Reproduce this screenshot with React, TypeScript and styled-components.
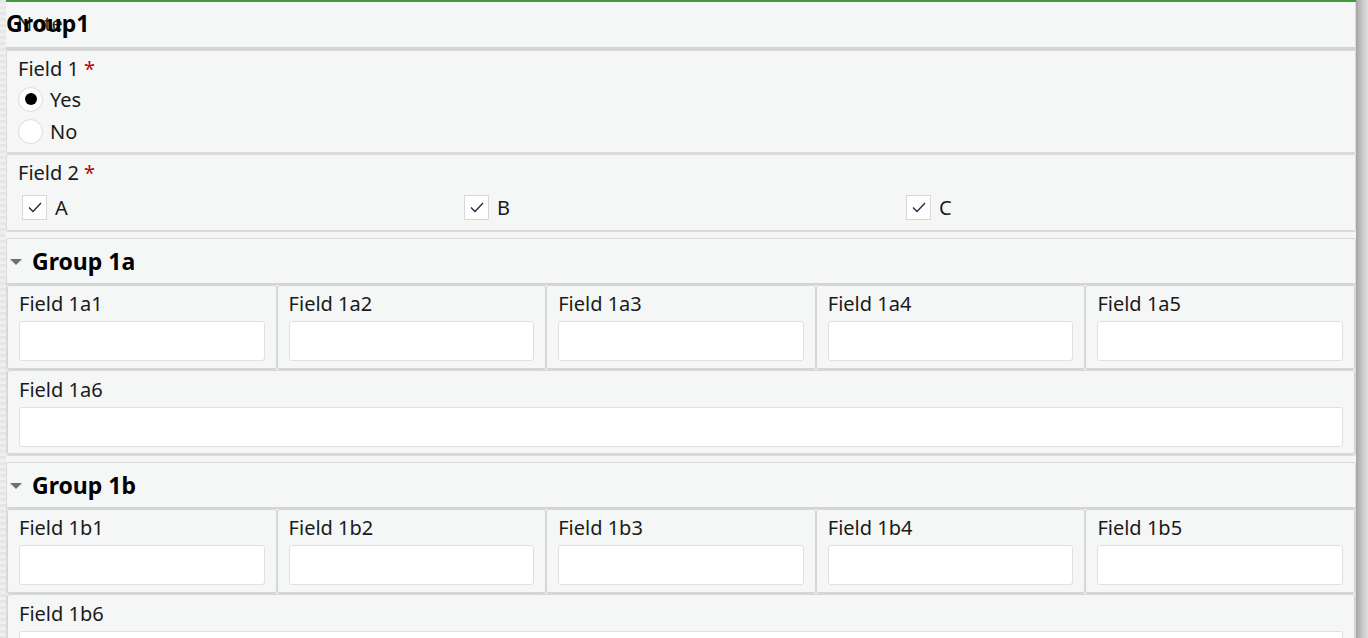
import React from "react";
import styled, { createGlobalStyle } from "styled-components";

const GlobalStyle = createGlobalStyle`
  html, body { margin: 0; padding: 0; height: 100%; overflow: hidden; }
  body { font-family: "Noto Sans", Lato, sans-serif; color: #1a1a1a; background: #f5f7f7; }
`;

const Page = styled.div`
  display: flex;
  width: 1368px;
  height: 638px;
  overflow: hidden;
`;

const LeftStrip = styled.div`
  width: 6px;
  flex: none;
  background: repeating-linear-gradient(180deg, #e6e6e6 0 3px, #efefef 3px 6px);
`;

const Scrollbar = styled.div`
  width: 12px;
  flex: none;
  background: linear-gradient(90deg, #a4a4a4 0, #bcbcbc 4px, #cfcfcf 8px, #dedede 12px);
`;

const Main = styled.div`
  flex: 1;
  display: flex;
  flex-direction: column;
  border-top: 2px solid #3f9a3a;
  min-width: 0;
`;

const Header = styled.div`
  position: relative;
  height: 45px;
  background: #f5f7f7;
  border-bottom: 3px solid #d4d4d4;
  border-right: 1px solid #dcdcdc;
  flex: none;
`;

const HeaderTitle = styled.div`
  position: absolute;
  left: 0;
  top: 5px;
  font-size: 23px;
  font-weight: 700;
  color: #000;
`;

const HeaderNote = styled.div`
  position: absolute;
  left: 11px;
  top: 8px;
  font-size: 20px;
  color: #2a2a2a;
`;

const Section = styled.div<{ $bottom: number }>`
  background: #f5f7f7;
  border: 1px solid #dadada;
  border-bottom-width: 2px;
  border-radius: 2px;
  padding: 6px 11px ${(p) => p.$bottom}px 11px;
`;

const Label = styled.div`
  font-size: 20px;
  line-height: 24px;
  color: #1a1a1a;
  white-space: nowrap;
`;

const Required = styled.span`
  color: #c00000;
  margin-left: 5px;
`;

const RadioList = styled.div`
  margin-top: 2px;
`;

const RadioRow = styled.label`
  display: flex;
  align-items: center;
  gap: 7px;
  height: 32px;
  font-size: 20px;
`;

const RadioCircle = styled.span<{ $checked?: boolean }>`
  width: 23px;
  height: 23px;
  border-radius: 50%;
  background: #fff;
  border: 1px solid #dcdcdc;
  display: flex;
  align-items: center;
  justify-content: center;
  &::after {
    content: "";
    width: 12px;
    height: 12px;
    border-radius: 50%;
    background: ${(p) => (p.$checked ? "#000" : "transparent")};
  }
`;

const CheckGrid = styled.div`
  display: grid;
  grid-template-columns: repeat(3, 1fr);
  margin-top: 8px;
`;

const CheckItem = styled.label`
  display: flex;
  align-items: center;
  gap: 8px;
  padding-left: 4px;
  height: 28px;
  font-size: 20px;
`;

const CheckBox = styled.span`
  width: 23px;
  height: 23px;
  background: #fff;
  border: 1px solid #d8d8d8;
  display: flex;
  align-items: center;
  justify-content: center;
`;

const Group = styled.div`
  margin-top: 6px;
  border: 1px solid #dadada;
  border-radius: 2px;
  background: #f5f7f7;
`;

const GroupHeader = styled.div`
  display: flex;
  align-items: center;
  height: 44px;
  border-bottom: 2px solid #d4d4d4;
  padding-left: 3px;
  gap: 10px;
`;

const Caret = styled.span`
  width: 0;
  height: 0;
  border-left: 6px solid transparent;
  border-right: 6px solid transparent;
  border-top: 6px solid #707070;
  margin-top: 2px;
`;

const GroupTitle = styled.div`
  font-size: 23px;
  font-weight: 700;
  color: #000;
`;

const FieldRow = styled.div<{ $cols: number }>`
  display: grid;
  grid-template-columns: repeat(${(p) => p.$cols}, 1fr);
`;

const FieldCell = styled.div<{ $wide?: boolean }>`
  border: 1px solid #d6d6d6;
  border-bottom-width: 2px;
  border-radius: 3px;
  padding: ${(p) => (p.$wide ? "7px 11px 6px" : "6px 11px 7px")};
  display: flex;
  flex-direction: column;
  gap: 5px;
`;

const TextInput = styled.input`
  height: 40px;
  box-sizing: border-box;
  border: 1px solid #e0e0e0;
  border-radius: 3px;
  background: #fff;
  font: inherit;
  outline: none;
`;

const Check = () => (
  <svg width="16" height="16" viewBox="0 0 16 16">
    <path d="M2 8.5 L6 12.5 L14 4" fill="none" stroke="#1a2a40" strokeWidth="1.3" />
  </svg>
);

const FieldGroup = ({ title, prefix }: { title: string; prefix: string }) => (
  <Group>
    <GroupHeader>
      <Caret />
      <GroupTitle>{title}</GroupTitle>
    </GroupHeader>
    <FieldRow $cols={5}>
      {[1, 2, 3, 4, 5].map((n) => (
        <FieldCell key={n}>
          <Label>Field {prefix}{n}</Label>
          <TextInput />
        </FieldCell>
      ))}
    </FieldRow>
    <FieldRow $cols={1}>
      <FieldCell $wide>
        <Label>Field {prefix}6</Label>
        <TextInput />
      </FieldCell>
    </FieldRow>
  </Group>
);

export default function App() {
  return (
    <Page>
      <GlobalStyle />
      <LeftStrip />
      <Main>
        <Header>
          <HeaderNote>Note</HeaderNote>
          <HeaderTitle>Group1</HeaderTitle>
        </Header>
        <Section $bottom={5}>
          <Label>
            Field 1<Required>*</Required>
          </Label>
          <RadioList>
            <RadioRow>
              <RadioCircle $checked />
              Yes
            </RadioRow>
            <RadioRow>
              <RadioCircle />
              No
            </RadioRow>
          </RadioList>
        </Section>
        <Section $bottom={9}>
          <Label>
            Field 2<Required>*</Required>
          </Label>
          <CheckGrid>
            {["A", "B", "C"].map((c) => (
              <CheckItem key={c}>
                <CheckBox>
                  <Check />
                </CheckBox>
                {c}
              </CheckItem>
            ))}
          </CheckGrid>
        </Section>
        <FieldGroup title="Group 1a" prefix="1a" />
        <FieldGroup title="Group 1b" prefix="1b" />
      </Main>
      <Scrollbar />
    </Page>
  );
}
